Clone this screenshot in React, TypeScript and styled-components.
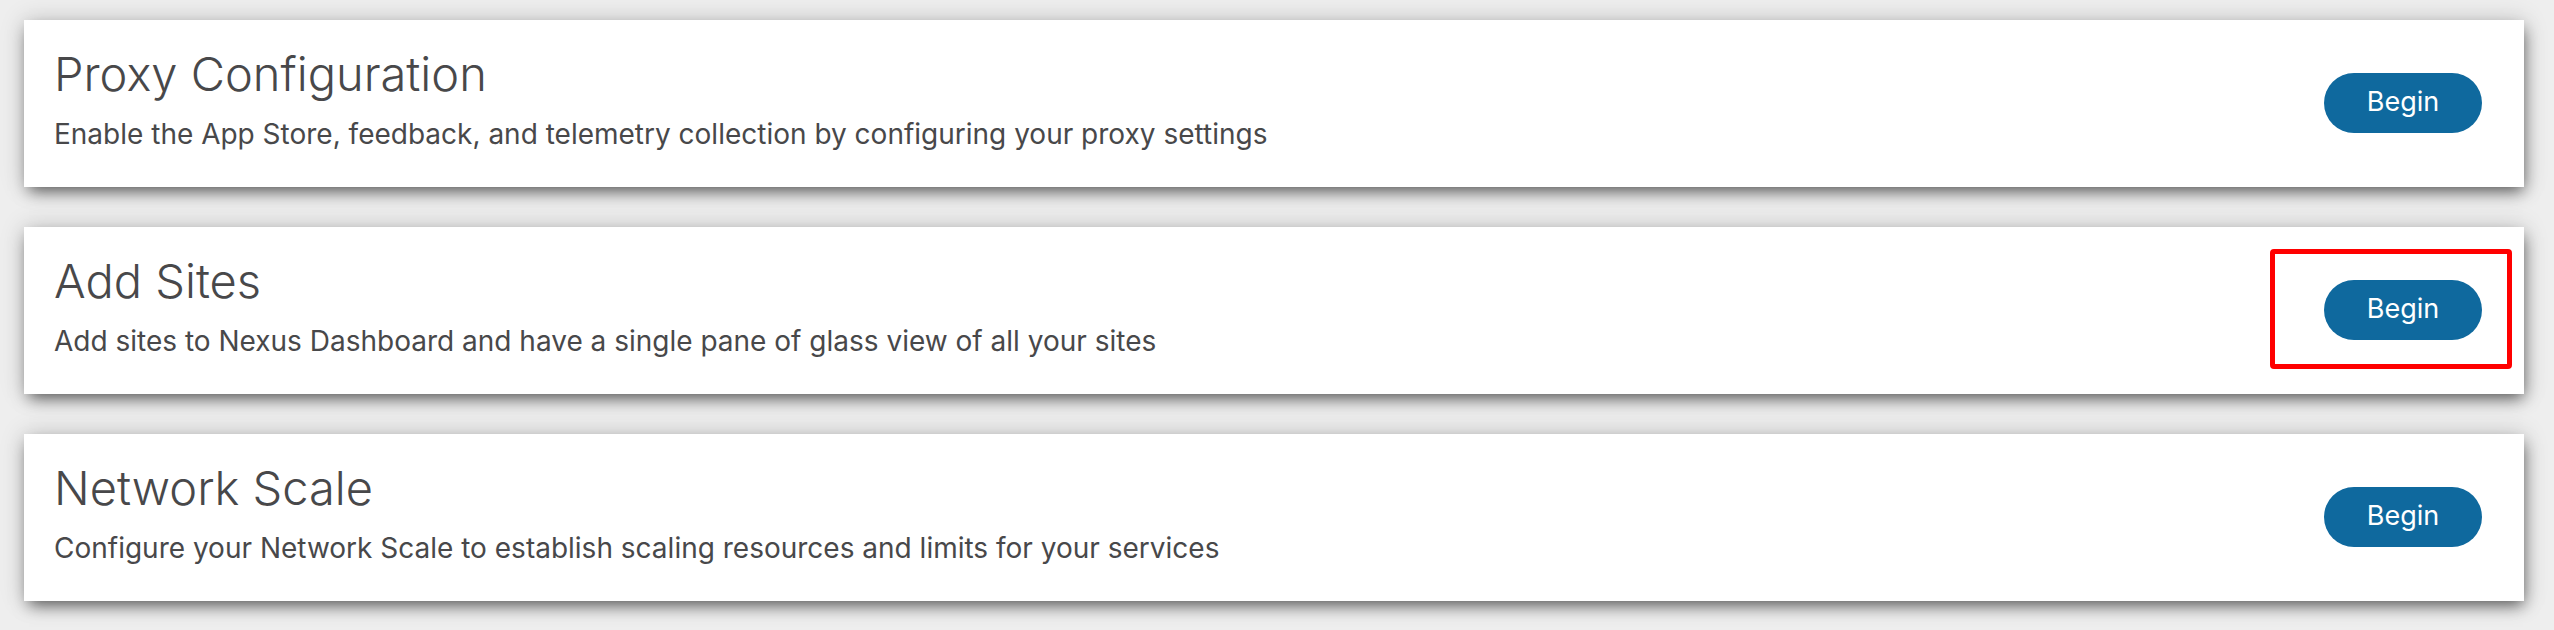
import React from 'react';
import styled, { createGlobalStyle } from 'styled-components';

const GlobalStyle = createGlobalStyle`
  *, *::before, *::after { box-sizing: border-box; }
  body {
    margin: 0;
    background: #eeeeee;
    color: #48484a;
    font-family: Inter, "Liberation Sans", sans-serif;
  }
`;

const StepList = styled.main`
  display: flex;
  flex-direction: column;
  gap: 40px;
  padding: 20px 30px 28px 24px;
`;

const Card = styled.section`
  display: flex;
  align-items: center;
  justify-content: space-between;
  gap: 32px;
  padding: 0 42px 1px 30px;
  background: #ffffff;
  box-shadow: 0 0 24px rgba(0, 0, 0, 0.16), 2px 7px 15px -3px rgba(0, 0, 0, 0.6);
`;

const Summary = styled.div`
  display: flex;
  flex-direction: column;
  gap: 11px;
  padding: 25px 0 32px;
`;

const Title = styled.h2`
  margin: 0;
  font-size: 47px;
  font-weight: 300;
  line-height: 58px;
`;

const Description = styled.p`
  margin: 0;
  font-size: 28px;
  line-height: 40px;
`;

const Action = styled.div`
  position: relative;
  flex: none;
`;

const BeginButton = styled.button`
  display: block;
  width: 158px;
  height: 60px;
  padding: 0 0 2px;
  border: 0;
  border-radius: 30px;
  background: #0f699e;
  color: #ffffff;
  font-family: inherit;
  font-size: 27px;
  line-height: 40px;
  cursor: pointer;
`;

const Highlight = styled.span`
  position: absolute;
  inset: -31px -30px -29px -54px;
  border: 5px solid #ff0000;
  border-radius: 4px;
  pointer-events: none;
`;

const steps = [
  {
    title: 'Proxy Configuration',
    description:
      'Enable the App Store, feedback, and telemetry collection by configuring your proxy settings',
  },
  {
    title: 'Add Sites',
    description: 'Add sites to Nexus Dashboard and have a single pane of glass view of all your sites',
    highlighted: true,
  },
  {
    title: 'Network Scale',
    description:
      'Configure your Network Scale to establish scaling resources and limits for your services',
  },
];

export default function App() {
  return (
    <>
      <GlobalStyle />
      <StepList>
        {steps.map((step) => (
          <Card key={step.title}>
            <Summary>
              <Title>{step.title}</Title>
              <Description>{step.description}</Description>
            </Summary>
            <Action>
              <BeginButton type="button">Begin</BeginButton>
              {step.highlighted && <Highlight />}
            </Action>
          </Card>
        ))}
      </StepList>
    </>
  );
}
